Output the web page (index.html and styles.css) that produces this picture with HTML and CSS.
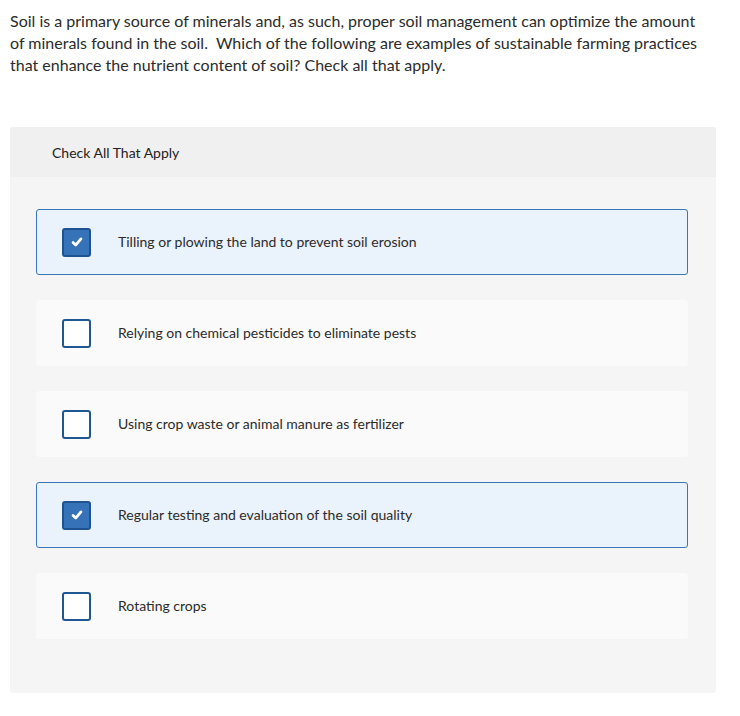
FILE: index.html
```html
<!DOCTYPE html>
<html>
<head>
<meta charset="utf-8">
<link rel="stylesheet" href="styles.css">
</head>
<body>
<p class="question">Soil is a primary source of minerals and, as such, proper soil management can optimize the amount of minerals found in the soil.&nbsp; Which of the following are examples of sustainable farming practices that enhance the nutrient content of soil? Check all that apply.</p>
<div class="panel">
  <div class="panel-head">Check All That Apply</div>
  <div class="options">
    <div class="option selected">
      <span class="box"><svg viewBox="0 0 16 16" width="14" height="14"><path d="M3.5 8.5 L6.5 11.5 L12.5 4.5" fill="none" stroke="#fff" stroke-width="3.2" stroke-linecap="round" stroke-linejoin="round"/></svg></span>
      <span class="label">Tilling or plowing the land to prevent soil erosion</span>
    </div>
    <div class="option">
      <span class="box"></span>
      <span class="label">Relying on chemical pesticides to eliminate pests</span>
    </div>
    <div class="option">
      <span class="box"></span>
      <span class="label">Using crop waste or animal manure as fertilizer</span>
    </div>
    <div class="option selected">
      <span class="box"><svg viewBox="0 0 16 16" width="14" height="14"><path d="M3.5 8.5 L6.5 11.5 L12.5 4.5" fill="none" stroke="#fff" stroke-width="3.2" stroke-linecap="round" stroke-linejoin="round"/></svg></span>
      <span class="label">Regular testing and evaluation of the soil quality</span>
    </div>
    <div class="option">
      <span class="box"></span>
      <span class="label">Rotating crops</span>
    </div>
  </div>
</div>
</body>
</html>
```
FILE: styles.css
```css
html, body { margin: 0; padding: 0; background: #fff; }
body {
  font-family: Lato, "Liberation Sans", sans-serif;
  color: #333;
  padding: 10px 10px 0 10px;
  width: 706px;
}
.question {
  margin: 0;
  max-width: 700px;
  font-size: 16px;
  line-height: 22px;
  color: #2b2b2b;
}
.panel {
  margin-top: 51px;
  background: #f5f5f5;
  border-radius: 3px;
  overflow: hidden;
}
.panel-head {
  background: #f0f0f0;
  height: 50px;
  padding-left: 42px;
  display: flex;
  align-items: center;
  font-size: 14px;
  color: #222;
}
.options {
  padding: 32px 28px 54px 26px;
  display: flex;
  flex-direction: column;
  gap: 25px;
}
.option {
  height: 66px;
  box-sizing: border-box;
  background: #fafafa;
  border: 1px solid #fafafa;
  border-radius: 3px;
  display: flex;
  align-items: center;
  padding-left: 25px;
  font-size: 14px;
  color: #2b2b2b;
}
.label { position: relative; top: -1px; }
.option.selected {
  background: #eaf2fb;
  border-color: #3a76b8;
}
.box {
  width: 29px;
  height: 29px;
  box-sizing: border-box;
  border: 2.5px solid #1f5793;
  border-radius: 3px;
  background: #fff;
  display: flex;
  align-items: center;
  justify-content: center;
  margin-right: 27px;
  flex: none;
}
.selected .box {
  background: #3572b8;
  border-color: #1f5290;
}
```
